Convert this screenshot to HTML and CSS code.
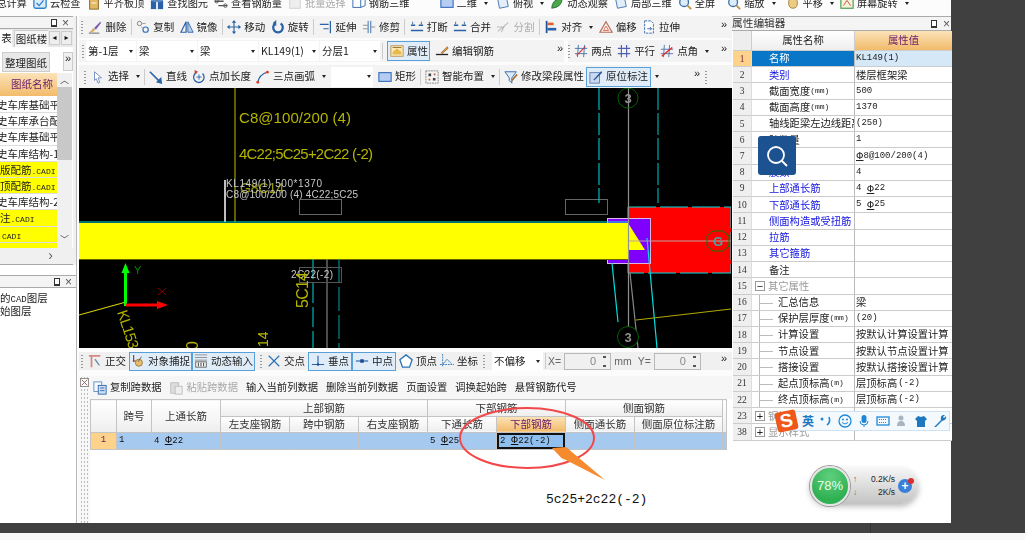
FILE: index.html
```html
<!DOCTYPE html>
<html lang="zh">
<head>
<meta charset="utf-8">
<title>属性编辑器</title>
<link rel="stylesheet" href="styles.css">
</head>
<body>
<svg class="defs" width="0" height="0">
  <symbol id="i-brush" viewBox="0 0 16 16"><path d="M1 14 Q4 13 6 9 L8 11 Q6 14 1 14Z" fill="#e0a040"/><path d="M7 9 L14 2 L15 3 L9 11Z" fill="#7a5ab0"/><path d="M1 15H13" stroke="#555"/></symbol>
  <symbol id="i-copy" viewBox="0 0 16 16"><circle cx="4" cy="4" r="2.5" fill="none" stroke="#777"/><circle cx="11" cy="11" r="3" fill="none" stroke="#3a76b8" stroke-width="1.4"/><path d="M7 4H11M6 8L9 10" stroke="#999"/></symbol>
  <symbol id="i-mirror" viewBox="0 0 16 16"><path d="M7 2V14H1Z" fill="none" stroke="#2a62a8" stroke-width="1.4"/><path d="M9 2V14H15Z" fill="#bcd2ea" stroke="#2a62a8"/></symbol>
  <symbol id="i-move" viewBox="0 0 16 16"><path d="M8 1V15M1 8H15" stroke="#2a62a8" stroke-width="1.3"/><path d="M8 0L10.500 3H5.500ZM8 16L5.500 13H10.500ZM0 8L3 5.500V10.500ZM16 8L13 10.500V5.500Z" fill="#2a62a8"/></symbol>
  <symbol id="i-rotate" viewBox="0 0 16 16"><path d="M11 4 A5.500 5.500 0 1 1 5 4" fill="none" stroke="#2a62a8" stroke-width="2.600"/><path d="M6 0V7L2 3.500Z" fill="#2a62a8"/></symbol>
  <symbol id="i-extend" viewBox="0 0 16 16"><path d="M13 1V15M1 5H11M5 10H11" stroke="#2a62a8" stroke-width="1.4"/></symbol>
  <symbol id="i-trim" viewBox="0 0 16 16"><path d="M7 1V15M10 1V15" stroke="#2a62a8"/><path d="M1 6H7M1 10H7M10 8H15" stroke="#888"/></symbol>
  <symbol id="i-break" viewBox="0 0 16 16"><path d="M1 6H6M10 6H15M1 12H15" stroke="#2a62a8" stroke-width="1.5"/><path d="M3 2V5M13 2V5" stroke="#2a62a8"/></symbol>
  <symbol id="i-split" viewBox="0 0 16 16"><path d="M2 13L14 3M1 8H9L6 14" stroke="#bbb" fill="none" stroke-width="1.3"/></symbol>
  <symbol id="i-align" viewBox="0 0 16 16"><path d="M3 1V15" stroke="#20509a" stroke-width="2"/><rect x="4" y="3" width="7" height="3" fill="#e06030"/><rect x="4" y="9" width="10" height="3" fill="#2a62a8"/></symbol>
  <symbol id="i-offset" viewBox="0 0 16 16"><path d="M8 2L15 14H1Z" fill="#fff0e8" stroke="#b07060" stroke-width="1.300"/><path d="M8 7L11 12H5Z" fill="none" stroke="#e06050"/></symbol>
  <symbol id="i-stretch" viewBox="0 0 16 16"><path d="M3 1H10L13 4V15H3Z" fill="#fff" stroke="#2a62a8" stroke-dasharray="3 1"/><path d="M6 10H11M9 8L11 10L9 12" stroke="#2a62a8" fill="none"/></symbol>
  <symbol id="i-prop" viewBox="0 0 16 16"><rect x="1" y="2" width="14" height="12" fill="#fbe9b8" stroke="#b89048"/><path d="M3 9L8 5L13 9V12H3Z" fill="#e8b84c"/><path d="M3 4H13" stroke="#8a6a30"/></symbol>
  <symbol id="i-edit" viewBox="0 0 16 16"><path d="M1 12H15" stroke="#222" stroke-width="1.500"/><path d="M7 10L14 3L15 5L8 11Z" fill="#d8a040" stroke="#804020" stroke-width=".6"/></symbol>
  <symbol id="i-two" viewBox="0 0 16 16"><path d="M5 1L4 15M12 1L11 15M1 5H15M1 11H15" stroke="#3a6ea8"/><path d="M3 13L13 3" stroke="#d83030" stroke-width="1.300"/></symbol>
  <symbol id="i-para" viewBox="0 0 16 16"><path d="M5 1V15M11 1V15M1 5H15M1 11H15" stroke="#5060b0" stroke-width="1.300"/></symbol>
  <symbol id="i-angle" viewBox="0 0 16 16"><path d="M5 1L4 15M11 1L10 15M1 6H15M1 11H15" stroke="#4a70b0"/><path d="M2 14L14 4" stroke="#e02828" stroke-width="1.500"/></symbol>
  <symbol id="i-select" viewBox="0 0 16 16"><path d="M4 2L12 9H8L10 14L8 15L6 10L4 12Z" fill="#fff" stroke="#6a86c0"/></symbol>
  <symbol id="i-line" viewBox="0 0 16 16"><path d="M1 2L12 13" stroke="#2a62a8" stroke-width="1.800"/><path d="M15 16L8 14L14 8Z" fill="#2a62a8"/></symbol>
  <symbol id="i-addlen" viewBox="0 0 16 16"><path d="M5 3A6 6 0 1 0 12 4" fill="none" stroke="#2a62a8" stroke-width="1.500"/><path d="M5 8H11M8 5V11" stroke="#2a62a8"/><path d="M3 0L7 2L3 5Z" fill="#d04030"/></symbol>
  <symbol id="i-arc" viewBox="0 0 16 16"><path d="M2 15Q3 5 14 2" fill="none" stroke="#2a62a8" stroke-width="1.300"/><circle cx="2" cy="14" r="1.600" fill="#e04020"/><circle cx="13" cy="2.500" r="1.600" fill="#e04020"/></symbol>
  <symbol id="i-rect" viewBox="0 0 16 16"><rect x="1" y="3" width="14" height="10" fill="#b5cdf0" stroke="#3a70c0" stroke-width="1.300"/></symbol>
  <symbol id="i-smart" viewBox="0 0 16 16"><rect x="1" y="1" width="14" height="14" fill="#f4f4f4" stroke="#777" stroke-dasharray="2 1"/><path d="M4 4h3v3h-3zM9 9h3v3h-3z" fill="#444"/><path d="M10 4h2v2h-2zM4 10h2v2h-2z" fill="#c06030"/></symbol>
  <symbol id="i-funnel" viewBox="0 0 16 16"><path d="M1 2H14L9 9V15L6 12V9Z" fill="#dbe9f8" stroke="#2a62a8"/><path d="M9 12L15 5" stroke="#a07030" stroke-width="1.800"/></symbol>
  <symbol id="i-mark" viewBox="0 0 16 16"><rect x="1" y="3" width="11" height="12" fill="#c9daf0" stroke="#5a7ab0"/><path d="M5 11L14 1L15 3L6 12Z" fill="#2a5a98"/></symbol>
  <symbol id="i-ortho" viewBox="0 0 16 16"><path d="M1 2H14M4 2V15" stroke="#d08a80" stroke-width="2"/><path d="M8 6L13 13" stroke="#6a8ab0" stroke-width="1.500"/></symbol>
  <symbol id="i-snap" viewBox="0 0 16 16"><path d="M3 1V9M2 8H8" stroke="#a04030" stroke-width="1.400"/><circle cx="9" cy="10" r="4" fill="#e8c070" stroke="#9a7030"/><path d="M12 3L8 9" stroke="#555"/></symbol>
  <symbol id="i-dyn" viewBox="0 0 16 16"><path d="M1 1H15M1 4H15M1 7H15" stroke="#888"/><rect x="2" y="9" width="12" height="6" fill="#fff" stroke="#555"/><path d="M5 10V14M8 10V14M11 10V14" stroke="#222"/></symbol>
  <symbol id="i-cross" viewBox="0 0 16 16"><path d="M2 2L14 14M14 2L2 14" stroke="#2a72b8" stroke-width="1.400"/></symbol>
  <symbol id="i-perp" viewBox="0 0 16 16"><path d="M1 12H15M8 2V12" stroke="#2a62a8" stroke-width="1.300"/><circle cx="8" cy="12" r="1.500" fill="#1a4a90"/></symbol>
  <symbol id="i-mid" viewBox="0 0 16 16"><path d="M1 8H15" stroke="#2a62a8" stroke-width="1.300"/><rect x="6" y="6" width="4" height="4" fill="#1a4a90"/></symbol>
  <symbol id="i-vertex" viewBox="0 0 16 16"><path d="M8 1L15 6.500L12 15H4L1 6.500Z" fill="#fff" stroke="#2a72b8" stroke-width="1.500"/></symbol>
  <symbol id="i-coord" viewBox="0 0 16 16"><path d="M3 0V15M0 12H16" stroke="#2a72b8" stroke-dasharray="2 1"/><path d="M3 12L8 6L13 11" stroke="#3a8ac8" fill="none"/></symbol>
  <symbol id="i-paste" viewBox="0 0 16 16"><rect x="2" y="2" width="9" height="12" fill="#ddd" stroke="#bbb"/><rect x="7" y="6" width="8" height="9" fill="#eee" stroke="#bbb"/></symbol>
  <symbol id="i-copy2" viewBox="0 0 16 16"><rect x="1" y="1" width="9" height="11" fill="#f4f8fc" stroke="#5a8ac0"/><rect x="6" y="5" width="9" height="10" fill="#cfe0f4" stroke="#2a62a8"/><path d="M8 8H13M8 11H13" stroke="#2a62a8"/></symbol>
  <symbol id="i-cloud" viewBox="0 0 16 16"><rect x="1" y="3" width="14" height="11" rx="2" fill="#dcecfa" stroke="#2a82d0" stroke-width="1.500"/><path d="M4 8L7 11L12 5" stroke="#2a82d0" fill="none" stroke-width="1.500"/></symbol>
  <symbol id="i-view" viewBox="0 0 16 16"><path d="M2 4L12 2L14 12L4 14Z" fill="#e4eefa" stroke="#3a6ea8"/></symbol>
  <symbol id="i-leaf" viewBox="0 0 16 16"><path d="M2 14Q2 4 14 2Q14 13 2 14Z" fill="#4aa84a" stroke="#2a6a3a"/></symbol>
  <symbol id="i-zoom" viewBox="0 0 16 16"><circle cx="7" cy="7" r="5" fill="#dcecfa" stroke="#3a6ea8" stroke-width="1.500"/><path d="M11 11L15 15" stroke="#c09040" stroke-width="2"/></symbol>
  <symbol id="i-hand" viewBox="0 0 16 16"><path d="M3 8Q3 3 6 3Q8 1 10 3Q13 3 13 8Q13 14 8 14Q3 14 3 8Z" fill="#eccb82" stroke="#a08040"/></symbol>
  <symbol id="i-screen" viewBox="0 0 16 16"><rect x="1" y="2" width="14" height="12" fill="#f4f4d8" stroke="#4a9a4a" stroke-width="1.300"/><path d="M4 11L8 5L12 11" stroke="#d04040" fill="none"/></symbol>
  <symbol id="i-calc" viewBox="0 0 16 16"><rect x="3" y="1" width="10" height="14" fill="#e4b860" stroke="#806020"/><path d="M5 4H11M5 8H11" stroke="#fff"/></symbol>
  <symbol id="i-find" viewBox="0 0 16 16"><rect x="1" y="5" width="6" height="10" fill="#2a62a8"/><rect x="9" y="5" width="6" height="10" fill="#2a62a8"/><rect x="3" y="2" width="10" height="5" fill="#5a8ac0"/></symbol>
  <symbol id="i-view2" viewBox="0 0 16 16"><path d="M1 6H11M5 11H15" stroke="#555" stroke-width="1.500"/><circle cx="3" cy="6" r="2" fill="none" stroke="#555"/><circle cx="13" cy="11" r="2" fill="none" stroke="#555"/></symbol>
  <symbol id="i-batch" viewBox="0 0 16 16"><rect x="2" y="3" width="12" height="11" fill="#eee" stroke="#ccc"/></symbol>
  <symbol id="i-steel" viewBox="0 0 16 16"><rect x="1" y="3" width="9" height="10" fill="none" stroke="#2a62a8"/><path d="M10 4L15 2V11L10 13" fill="none" stroke="#2a62a8"/></symbol>
</svg>

<div class="screen">
  <div class="desk">
    <div class="app">
      <div class="topbar">
        <span class="ti t-clip">总计算</span>
        <span class="ti"><svg class="ic"><use href="#i-cloud"/></svg>云检查</span>
        <span class="ti"><svg class="ic"><use href="#i-calc"/></svg>平齐板顶</span>
        <span class="ti"><svg class="ic"><use href="#i-find"/></svg>查找图元</span>
        <span class="ti"><svg class="ic"><use href="#i-view2"/></svg>查看钢筋量</span>
        <span class="ti off"><svg class="ic"><use href="#i-batch"/></svg>批量选择</span>
        <span class="ti"><svg class="ic"><use href="#i-steel"/></svg>钢筋三维</span>
        <span class="ti gap-2d"><svg class="ic"><use href="#i-rect"/></svg>二维<i class="caret"></i></span>
        <span class="ti gap-a"><svg class="ic"><use href="#i-view"/></svg>俯视<i class="caret"></i></span>
        <span class="ti"><svg class="ic"><use href="#i-leaf"/></svg>动态观察</span>
        <span class="ti"><svg class="ic"><use href="#i-view"/></svg>局部三维</span>
        <span class="ti"><svg class="ic"><use href="#i-zoom"/></svg>全屏</span>
        <span class="ti gap-b"><svg class="ic"><use href="#i-zoom"/></svg>缩放<i class="caret"></i></span>
        <span class="ti gap-c"><svg class="ic"><use href="#i-hand"/></svg>平移<i class="caret"></i></span>
        <span class="ti"><svg class="ic"><use href="#i-screen"/></svg>屏幕旋转<i class="caret"></i></span>
      </div>

      <div class="work">
        <aside class="lside">
          <section class="lpanel upper">
            <header class="ptitle"><b class="pin"></b><b class="close">×</b></header>
            <div class="tabs">
              <span class="tab on">表</span>
              <span class="tab cut">图纸楼</span>
              <span class="tabarrow">◂</span>
              <span class="tabarrow">▸</span>
            </div>
            <div class="ltools"><span class="lbtn">整理图纸</span><span class="more box">»</span></div>
            <div class="dwg">
              <div class="dwg-table">
                <div class="dwg-h">图纸名称</div>
                <div class="dwg-r cutleft">史车库基础平面</div>
                <div class="dwg-r cutleft">史车库承台配筋</div>
                <div class="dwg-r cutleft">史车库基础平面</div>
                <div class="dwg-r cutleft">史车库结构-1</div>
                <div class="dwg-r y">版配筋<em>.CADI</em></div>
                <div class="dwg-r y">顶配筋<em>.CADI</em></div>
                <div class="dwg-r cutleft">史车库结构-2</div>
                <div class="dwg-r y">注<em>.CADI</em></div>
                <div class="dwg-r y pad2"><em>CADI</em></div>
                <div class="dwg-r y tail pad2"><em>CADI</em></div>
              </div>
              <div class="vscroll">
                <span class="sb-arrow">︿</span>
                <span class="sb-thumb"></span>
                <span class="sb-arrow end">﹀</span>
              </div>
            </div>
            <div class="hscroll">›</div>
          </section>
          <section class="lpanel lower">
            <header class="ptitle"><b class="pin"></b><b class="close">×</b></header>
            <div class="layers">
              <div class="layer">的<em>CAD</em>图层</div>
              <div class="layer">始图层</div>
            </div>
          </section>
        </aside>

        <main class="center">
          <div class="tb r1">
            <i class="grip"></i>
            <span class="ti"><svg class="ic"><use href="#i-brush"/></svg>删除</span>
            <i class="sep"></i>
            <span class="ti"><svg class="ic"><use href="#i-copy"/></svg>复制</span>
            <span class="ti"><svg class="ic"><use href="#i-mirror"/></svg>镜像</span>
            <i class="sep"></i>
            <span class="ti"><svg class="ic"><use href="#i-move"/></svg>移动</span>
            <span class="ti"><svg class="ic"><use href="#i-rotate"/></svg>旋转</span>
            <i class="sep"></i>
            <span class="ti"><svg class="ic"><use href="#i-extend"/></svg>延伸</span>
            <span class="ti"><svg class="ic"><use href="#i-trim"/></svg>修剪</span>
            <i class="sep"></i>
            <span class="ti"><svg class="ic"><use href="#i-break"/></svg>打断</span>
            <span class="ti"><svg class="ic"><use href="#i-break"/></svg>合并</span>
            <span class="ti off"><svg class="ic"><use href="#i-split"/></svg>分割</span>
            <i class="sep"></i>
            <span class="ti"><svg class="ic"><use href="#i-align"/></svg>对齐<i class="caret"></i></span>
            <span class="ti"><svg class="ic"><use href="#i-offset"/></svg>偏移</span>
            <span class="ti"><svg class="ic"><use href="#i-stretch"/></svg>拉伸</span>
            <span class="more end">»</span>
          </div>

          <div class="tb r2">
            <i class="grip"></i>
            <span class="combo w50">第-1层<i class="caret"></i></span>
            <span class="combo w60">梁<i class="caret"></i></span>
            <span class="combo w60">梁<i class="caret"></i></span>
            <span class="combo w60">KL149(1)<i class="caret"></i></span>
            <span class="combo w60">分层1<i class="caret"></i></span>
            <i class="sep"></i>
            <span class="ti sel w43"><svg class="ic"><use href="#i-prop"/></svg>属性</span>
            <span class="ti"><svg class="ic"><use href="#i-edit"/></svg>编辑钢筋</span>
            <span class="more m-mid">»</span>
            <i class="split"></i>
            <i class="grip"></i>
            <span class="ti"><svg class="ic"><use href="#i-two"/></svg>两点</span>
            <span class="ti"><svg class="ic"><use href="#i-para"/></svg>平行</span>
            <span class="ti"><svg class="ic"><use href="#i-angle"/></svg>点角<i class="caret"></i></span>
            <span class="more end">»</span>
          </div>

          <div class="tb r3">
            <i class="grip"></i>
            <span class="ti"><svg class="ic"><use href="#i-select"/></svg>选择<i class="caret"></i></span>
            <i class="sep"></i>
            <span class="ti"><svg class="ic"><use href="#i-line"/></svg>直线</span>
            <span class="ti"><svg class="ic"><use href="#i-addlen"/></svg>点加长度</span>
            <span class="ti"><svg class="ic"><use href="#i-arc"/></svg>三点画弧<i class="caret"></i></span>
            <span class="combo w38"><i class="caret"></i></span>
            <span class="ti"><svg class="ic"><use href="#i-rect"/></svg>矩形</span>
            <i class="sep"></i>
            <span class="ti"><svg class="ic"><use href="#i-smart"/></svg>智能布置<i class="caret"></i></span>
            <i class="sep"></i>
            <span class="ti"><svg class="ic"><use href="#i-funnel"/></svg>修改梁段属性</span>
            <span class="ti sel mark-btn"><svg class="ic"><use href="#i-mark"/></svg>原位标注</span>
            <i class="caret tight"></i>
            <span class="more m-r3">»</span>
            <i class="grip"></i>
          </div>

          <div class="canvas">
            <svg class="cad" viewBox="0 0 652 260" width="652" height="260">
              <rect width="652" height="260" fill="#000"/>
              <line x1="156" y1="0" x2="156" y2="134" stroke="#808000" stroke-width="1.500"/>
              <text x="160" y="35" class="cad-y" textLength="112" font-size="15">C8@100/200 (4)</text>
              <text x="160" y="71" class="cad-y" textLength="134" font-size="15">4C22;5C25+2C22 (-2)</text>
              <line x1="146" y1="92" x2="146" y2="134" stroke="#fff" stroke-width="1.500"/>
              <text x="161" y="105" class="cad-y dim" textLength="44" font-size="14">G8C14</text>
              <text x="147" y="99" class="cad-w" textLength="96" font-size="10">KL149(1) 500*1370</text>
              <text x="147" y="110" class="cad-w" textLength="132" font-size="10">C8@100/200 (4)  4C22;5C25</text>
              <rect x="220.500" y="111.500" width="42" height="15" fill="none" stroke="#666"/>
              <rect x="486.500" y="111.500" width="42" height="15" fill="none" stroke="#666"/>

              <line x1="520" y1="0" x2="520" y2="115" stroke="#00b8b8" stroke-dasharray="22 3" stroke-width="1.200"/>
              <line x1="579" y1="0" x2="579" y2="115" stroke="#00a8a8" stroke-dasharray="22 3" stroke-width="1.200"/>

              <rect x="549" y="119" width="103" height="66" fill="#f00"/>
              <rect x="549" y="119" width="103" height="66" fill="none" stroke="#00d8d8" stroke-dasharray="28 4"/>
              <rect x="528.500" y="130.500" width="43" height="45" fill="#8000ff" stroke="#d8b8e0"/>
              <polygon points="0,135 549,135 566,162 549,162 549,171 0,171" fill="#ff0"/>
              <line x1="0" y1="134" x2="549" y2="134" stroke="#00e8d8"/>
              <line x1="0" y1="171.500" x2="549" y2="171.500" stroke="#666600"/>
              <path d="M549 153H652" stroke="#c0a0a0" stroke-width="1.200"/>
              <line x1="549.500" y1="0" x2="549.500" y2="260" stroke="#909090" stroke-width="1.200"/>

              <circle cx="549" cy="10" r="10" fill="none" stroke="#006000"/>
              <text x="549" y="15" class="cad-n">3</text>
              <polygon points="634,143 644,143 650,148 650,158 644,163 634,163 628,158 628,148" fill="none" stroke="#008000"/>
              <text x="639" y="158" class="cad-n teal">G</text>

              <line x1="533" y1="175" x2="539" y2="234" stroke="#00e0e0" stroke-width="1.200"/>
              <line x1="568" y1="150" x2="578" y2="260" stroke="#00e0e0" stroke-width="1.200"/>
              <line x1="551" y1="185" x2="559" y2="260" stroke="#888" stroke-width="1.200"/>
              <line x1="557" y1="232" x2="652" y2="221" stroke="#b0a800" stroke-width="1.200"/>
              <circle cx="549" cy="249" r="10.500" fill="#000" stroke="#006000"/>
              <text x="549" y="254" class="cad-n">3</text>

              <line x1="234" y1="171" x2="234" y2="260" stroke="#00d8d8" stroke-dasharray="20 4"/>
              <line x1="248" y1="171" x2="248" y2="260" stroke="#808080" stroke-width="1.200"/>
              <line x1="260" y1="171" x2="260" y2="260" stroke="#008888" stroke-width="1.200" stroke-dasharray="24 4"/>
              <rect x="220.500" y="179.500" width="42" height="15" fill="none" stroke="#555"/>
              <text x="212" y="190" class="cad-w" textLength="42" font-size="10">2C22(-2)</text>
              <text class="cad-y" font-size="16" textLength="36" transform="translate(229 220) rotate(-90)">5C14</text>
              <text class="cad-y" font-size="14" transform="translate(189 259) rotate(-90)">14</text>
              <text class="cad-y" font-size="16" transform="translate(119 262) rotate(-90)">0</text>
              <text class="cad-y" font-size="15" textLength="40" transform="translate(38 224) rotate(72)">KL153</text>
              <line x1="0" y1="227" x2="47" y2="214" stroke="#d8d000" stroke-width="1.200"/>
              <rect x="45" y="185" width="3" height="33" fill="#00ff00"/>
              <polygon points="46.500,175 50.500,185 42.500,185" fill="#00ff00"/>
              <rect x="47" y="215.500" width="33" height="3" fill="#ff0000"/>
              <polygon points="89,217 78,213 78,221" fill="#ff0000"/>
              <text x="55" y="186" class="cad-ax">Y</text>
              <path d="M79 200L87 207M87 200L79 207" stroke="#900000" fill="none"/>
            </svg>
          </div>

          <div class="tb snapbar">
            <i class="grip"></i>
            <span class="ti"><svg class="ic"><use href="#i-ortho"/></svg>正交</span>
            <span class="tog-group">
              <span class="ti sel"><svg class="ic"><use href="#i-snap"/></svg>对象捕捉</span>
              <span class="ti sel"><svg class="ic"><use href="#i-dyn"/></svg>动态输入</span>
            </span>
            <i class="grip"></i>
            <span class="ti"><svg class="ic"><use href="#i-cross"/></svg>交点</span>
            <span class="tog-group pts">
              <span class="ti sel"><svg class="ic"><use href="#i-perp"/></svg>垂点</span>
              <span class="ti sel"><svg class="ic"><use href="#i-mid"/></svg>中点</span>
            </span>
            <span class="ti"><svg class="ic"><use href="#i-vertex"/></svg>顶点</span>
            <span class="ti"><svg class="ic"><use href="#i-coord"/></svg>坐标</span>
            <i class="grip"></i>
            <span class="combo plain">不偏移<i class="caret"></i></span>
            <i class="sep"></i>
            <span class="lbl">X=</span>
            <span class="spin">0<i class="updown"></i></span>
            <span class="lbl">mm</span>
            <span class="lbl ylbl">Y=</span>
            <span class="spin">0<i class="updown"></i></span>
            <span class="more end">»</span>
          </div>

          <div class="gridpanel">
            <div class="handle"><svg class="hicon" viewBox="0 0 10 10"><rect x=".5" y=".5" width="9" height="9" fill="#fff" stroke="#888"/><path d="M2 2L8 8M8 2L2 8" stroke="#a05050"/></svg></div>
            <div class="gridbody">
              <div class="gridtools">
                <span class="ti"><svg class="ic"><use href="#i-copy2"/></svg>复制跨数据</span>
                <span class="ti off"><svg class="ic"><use href="#i-paste"/></svg>粘贴跨数据</span>
                <span class="ti">输入当前列数据</span>
                <span class="ti">删除当前列数据</span>
                <span class="ti">页面设置</span>
                <span class="ti">调换起始跨</span>
                <span class="ti">悬臂钢筋代号</span>
              </div>
              <table class="span-table">
                <colgroup>
                  <col class="c-num"><col class="c-span"><col class="c-std"><col class="c-std"><col class="c-std"><col class="c-std"><col class="c-std"><col class="c-std"><col class="c-std"><col class="c-wide"><col>
                </colgroup>
                <thead>
                  <tr>
                    <th rowspan="2"></th><th rowspan="2">跨号</th><th rowspan="2">上通长筋</th>
                    <th colspan="3">上部钢筋</th><th colspan="2">下部钢筋</th><th colspan="2">侧面钢筋</th><th rowspan="2"></th>
                  </tr>
                  <tr>
                    <th>左支座钢筋</th><th>跨中钢筋</th><th>右支座钢筋</th><th>下通长筋</th><th class="active">下部钢筋</th><th>侧面通长筋</th><th>侧面原位标注筋</th>
                  </tr>
                </thead>
                <tbody>
                  <tr>
                    <td class="rn">1</td><td>1</td><td class="cur">4 <span class="bar">Φ</span>22</td><td></td><td></td><td></td><td>5 <span class="bar">Φ</span>25</td><td class="focus">2 <span class="bar">Φ</span>22(-2)</td><td></td><td></td><td></td>
                  </tr>
                </tbody>
              </table>
            </div>
          </div>
        </main>

        <aside class="rside">
          <header class="rtitle"><span>属性编辑器</span><b class="pin"></b><b class="close">×</b></header>
          <div class="pg">
            <div class="ph corner"></div><div class="ph">属性名称</div><div class="ph act">属性值</div>
            <div class="pn act">1</div><div class="pk hl">名称</div><div class="pv hl2">KL149(1)</div>
            <div class="pn">2</div><div class="pk link">类别</div><div class="pv cn">楼层框架梁</div>
            <div class="pn">3</div><div class="pk">截面宽度<em>(mm)</em></div><div class="pv">500</div>
            <div class="pn">4</div><div class="pk">截面高度<em>(mm)</em></div><div class="pv">1370</div>
            <div class="pn">5</div><div class="pk">轴线距梁左边线距离</div><div class="pv">(250)</div>
            <div class="pn">6</div><div class="pk">跨数量</div><div class="pv">1</div>
            <div class="pn">7</div><div class="pk link">箍筋</div><div class="pv"><span class="bar">Φ</span>8@100/200(4)</div>
            <div class="pn">8</div><div class="pk link">肢数</div><div class="pv">4</div>
            <div class="pn">9</div><div class="pk link">上部通长筋</div><div class="pv">4 <span class="bar">Φ</span>22</div>
            <div class="pn">10</div><div class="pk link">下部通长筋</div><div class="pv">5 <span class="bar">Φ</span>25</div>
            <div class="pn">11</div><div class="pk link">侧面构造或受扭筋</div><div class="pv"></div>
            <div class="pn">12</div><div class="pk link">拉筋</div><div class="pv"></div>
            <div class="pn">13</div><div class="pk link">其它箍筋</div><div class="pv"></div>
            <div class="pn">14</div><div class="pk">备注</div><div class="pv"></div>
            <div class="pn">15</div><div class="pk group"><i class="exp">−</i>其它属性</div><div class="pv"></div>
            <div class="pn">16</div><div class="pk tree">汇总信息</div><div class="pv cn">梁</div>
            <div class="pn">17</div><div class="pk tree">保护层厚度<em>(mm)</em></div><div class="pv">(20)</div>
            <div class="pn">18</div><div class="pk tree">计算设置</div><div class="pv cn">按默认计算设置计算</div>
            <div class="pn">19</div><div class="pk tree">节点设置</div><div class="pv cn">按默认节点设置计算</div>
            <div class="pn">20</div><div class="pk tree">搭接设置</div><div class="pv cn">按默认搭接设置计算</div>
            <div class="pn">21</div><div class="pk tree">起点顶标高<em>(m)</em></div><div class="pv cn">层顶标高<em>(-2)</em></div>
            <div class="pn">22</div><div class="pk tree">终点顶标高<em>(m)</em></div><div class="pv cn">层顶标高<em>(-2)</em></div>
            <div class="pn">23</div><div class="pk group"><i class="exp">+</i>钢筋业务属性</div><div class="pv"></div>
            <div class="pn">38</div><div class="pk group"><i class="exp">+</i>显示样式</div><div class="pv"></div>
          </div>
        </aside>
      </div>
    </div>
  </div>
  <div class="footer"></div>

  <!-- overlays -->
  <div class="searchbtn"><svg viewBox="0 0 24 24" width="24" height="24"><circle cx="11" cy="11" r="8" fill="none" stroke="#fff" stroke-width="1.800"/><path d="M17 17L22 22" stroke="#fff" stroke-width="2"/></svg></div>

  <svg class="mark" viewBox="0 0 1025 540" width="1025" height="540">
    <ellipse cx="527" cy="438" rx="67" ry="30" fill="none" stroke="#f2484a" stroke-width="2"/>
    <polygon points="552,448 566,447 605,480 562,458 571,468" fill="#f58a2e"/>
  </svg>
  <div class="note">5c25+2c22(-2)</div>

  <div class="sogou">
    <span class="slogo">S</span>
    <span class="sg-en">英</span>
    <svg class="sg" viewBox="0 0 14 14"><circle cx="3" cy="5" r="1.500" fill="#1e88d8"/><path d="M10 3Q12 8 8 11" fill="none" stroke="#1e88d8" stroke-width="1.600"/></svg>
    <svg class="sg" viewBox="0 0 14 14"><circle cx="7" cy="7" r="6" fill="none" stroke="#1e88d8" stroke-width="1.300"/><circle cx="5" cy="5.500" r="1" fill="#1e88d8"/><circle cx="9" cy="5.500" r="1" fill="#1e88d8"/><path d="M4 8.500Q7 11.500 10 8.500" fill="none" stroke="#1e88d8"/></svg>
    <svg class="sg" viewBox="0 0 14 14"><rect x="4.500" y="1" width="5" height="8" rx="2.500" fill="#1e88d8"/><path d="M3 7Q3 11 7 11Q11 11 11 7M7 11V13" fill="none" stroke="#1e88d8"/></svg>
    <svg class="sg" viewBox="0 0 14 14"><rect x="1" y="3" width="12" height="8" fill="none" stroke="#1e88d8" stroke-width="1.300"/><path d="M3 5.500H11M3 8.500H11" stroke="#1e88d8" stroke-dasharray="1 1"/></svg>
    <svg class="sg" viewBox="0 0 14 14"><circle cx="6" cy="4" r="2.500" fill="#a8b4c0"/><path d="M2 12Q2 7 6 7Q10 7 10 12Z" fill="#a8b4c0"/></svg>
    <svg class="sg" viewBox="0 0 14 14"><path d="M4 2L7 3L10 2L13 5L11 7V13H3V7L1 5Z" fill="#1e78c0"/></svg>
    <svg class="sg" viewBox="0 0 14 14"><path d="M1 13L8 6Q7 2 10 1L12 1L10 3L11 4L13 2Q14 6 9 7L3 13Z" fill="#1e78c0"/></svg>
  </div>

  <div class="netwidget">
    <div class="gauge">78%</div>
    <div class="speeds">
      <div class="sp"><i class="up">↑</i><span>0.2K/s</span></div>
      <div class="sp"><i class="down">↓</i><span>2K/s</span></div>
    </div>
    <div class="plus">+<i class="dot"></i></div>
  </div>
</div>
</body>
</html>
```
FILE: styles.css
```css
* { box-sizing: border-box; }
html, body { margin: 0; padding: 0; }
body { width: 1025px; height: 540px; overflow: hidden; font: 10.5px/1 "Noto Sans CJK SC", "Liberation Sans", sans-serif; color: #222; }
i { font-style: normal; }
em { font: 8px/1 "Liberation Mono", monospace; }
b { font-weight: normal; }
.defs { position: absolute; }

.screen { position: relative; width: 1025px; height: 540px; display: flex; flex-direction: column; background: #f8f8f8; }
.desk { height: 533px; flex: none; background: linear-gradient(#333, #333) 870px 523px / 1px 10px no-repeat, #404040; }
.footer { flex: 1; }
.app { width: 951px; height: 523px; display: flex; flex-direction: column; background: #fcfcfc; filter: blur(.4px); }

.topbar { height: 16px; flex: none; display: flex; align-items: flex-start; gap: 6px; overflow: hidden; font-size: 10.2px; }
.topbar .ti { margin-top: -4px; height: 14px; }
.topbar .t-clip { width: 27px; justify-content: flex-end; overflow: hidden; white-space: nowrap; }
.topbar .gap-2d { margin-left: 24px; }
.topbar .gap-a { margin-left: 2px; }
.topbar .gap-b { margin-left: 6px; }
.topbar .gap-c { margin-left: 4px; }

.ti { display: inline-flex; align-items: center; gap: 3px; white-space: nowrap; flex: none; }
.ti.off { color: #aaa; }
.ic { width: 14px; height: 14px; flex: none; }
.caret { display: inline-block; width: 0; height: 0; border: 2.5px solid transparent; border-top: 3px solid #222; border-bottom: 0; margin-left: 4px; flex: none; }
.caret.tight { margin-left: -1px; }
.sep { width: 1px; height: 16px; background: #ccc; margin: 0 -1px; flex: none; }
.grip { width: 2px; height: 14px; flex: none; background: radial-gradient(circle, #999 0.7px, transparent 1px) 0 0 / 2px 3px; }
.more { font: 11px/1 "Liberation Sans", sans-serif; color: #222; flex: none; }
.more.end { margin-left: auto; margin-right: 5px; margin-top: -6px; }
.more.m-mid { margin-left: 60px; margin-top: -6px; }
.more.m-r3 { margin-left: 30px; margin-top: -6px; }
.split { width: 4px; height: 24px; background: #fcfcfc; flex: none; margin: 0 -2px 0 0; }

.work { flex: 1; display: flex; min-height: 0; }

.lside { width: 77px; flex: none; display: flex; flex-direction: column; background: #fff; border-right: 1px solid #b8b8b8; }
.lpanel.upper { height: 249px; flex: none; background: #f0f0f0; border-bottom: 1px solid #aaa; width: 73px; box-shadow: 3px 0 0 #f0f0f0; }
.lpanel.lower { margin-top: 10px; flex: 1; background: #fff; }
.ptitle { height: 13px; display: flex; justify-content: flex-end; align-items: center; gap: 5px; padding-right: 3px; background: #f4f4f4; border-top: 1px solid #aaa; border-bottom: 1px solid #aaa; }
.pin { width: 6px; height: 8px; border: 1px solid #333; border-bottom-width: 2px; background: #fff; flex: none; }
.close { font: 12px/1 "Liberation Sans", sans-serif; color: #555; width: 8px; flex: none; }
.tabs { height: 18px; display: flex; align-items: flex-end; background: #e8e8e8; padding-right: 1px; }
.tab { height: 17px; line-height: 16px; white-space: nowrap; overflow: hidden; }
.tab.on { width: 12px; background: #fff; text-align: right; }
.tab.cut { width: 35px; margin-left: 2px; background: #f6f6f6; padding-left: 1px; border-left: 1px solid #ccc; border-top: 1px solid #ccc; }
.tabarrow { width: 11px; height: 14px; margin: 0 0 2px 1px; background: #eee; border: 1px solid #ccc; font: 8px/12px "DejaVu Sans", sans-serif; text-align: center; color: #111; flex: none; }
.ltools { height: 26px; display: flex; align-items: center; background: #fff; padding-top: 3px; }
.lbtn { height: 20px; margin-left: 2px; width: 48px; line-height: 19px; text-align: center; background: #e8e8e8; border: 1px solid #ccc; flex: none; }
.more.box { width: 10px; height: 19px; margin-left: 13px; text-align: center; background: #f0f0f0; border: 1px solid #ccc; line-height: 10px; }
.dwg { display: flex; height: 175px; background: #fff; overflow: hidden; }
.dwg-table { width: 57px; flex: none; }
.dwg-h { height: 23px; line-height: 22px; text-align: center; background: linear-gradient(#fbe3b8, #f2bb6b); color: #6a1a6a; margin-bottom: 1px; padding-left: 7px; }
.dwg-r { height: 16.200px; line-height: 15px; white-space: nowrap; overflow: hidden; background: #fff; color: #222; border-bottom: 1px solid #ddd; }
.dwg-r.y { background: #ff0; }
.dwg-r.cutleft { text-indent: -3px; }
.dwg-r.pad2 { padding-left: 2px; }
.vscroll { width: 15px; flex: none; display: flex; flex-direction: column; background: #f0f0f0; }
.sb-arrow { height: 14px; text-align: center; font: 9px/14px "Noto Sans CJK SC", sans-serif; color: #444; flex: none; }
.sb-arrow.end { margin-top: auto; margin-bottom: 3px; height: 12px; }
.sb-thumb { height: 73px; background: #c8c8c8; flex: none; }
.hscroll { height: 16px; text-align: right; padding-right: 20px; font: 14px/15px "Liberation Sans", sans-serif; color: #666; }
.layers { padding-top: 3px; }
.layer { height: 13px; line-height: 13px; color: #222; white-space: nowrap; overflow: hidden; }
.layer em { font-size: 9px; }

.center { width: 655px; flex: none; display: flex; flex-direction: column; background: #fcfcfc; padding-left: 2px; }
.tb { display: flex; align-items: center; gap: 6px; flex: none; background: #f3f3f3; }
.tb.r1 { height: 22px; padding-left: 2px; gap: 5.4px; }
.tb.r2 { height: 22px; margin-top: 2px; padding-left: 2px; gap: 1px; }
.tb.r3 { height: 23px; margin-top: 3px; padding-left: 5px; gap: 5px; }
.combo { height: 20px; background: #fff; display: inline-flex; align-items: center; justify-content: space-between; padding: 0 3px 0 2px; flex: none; white-space: nowrap; color: #222; }
.combo.w50 { width: 50px; }
.combo.w60 { width: 60px; }
.combo.w38 { width: 42px; justify-content: flex-end; padding-right: 2px; }
.combo.plain { width: 51px; margin-left: 2px; }
.r2 .sep { margin: 0 1px; }
.r2 .ti { margin: 0 2px; }
.r2 .grip { margin: 0 1px; }
.sel { padding: 0 2px; height: 20px; background: #e0edf9; border: 1px solid #5aa0d8; }
.mark-btn { margin-left: -3px; }
.w43 { width: 43px; }

.canvas { height: 260px; flex: none; background: #000; }
.cad { display: block; }
.cad-y { fill: #b4b400; font-family: "Liberation Sans", sans-serif; }
.cad-y.dim { fill: #9a9a00; }
.cad-w { fill: #c8c8c8; font-family: "Liberation Sans", sans-serif; }
.cad-n { fill: #909090; font: bold 13px "Liberation Sans", sans-serif; text-anchor: middle; }
.cad-n.teal { fill: #50a0a0; }
.cad-ax { fill: #008800; font: 11px "Liberation Sans", sans-serif; }

.snapbar { height: 18px; margin-top: 4px; padding-left: 0; gap: 3px; background: #f0f0f0; }
.snapbar .grip { margin: 0 2px; }
.snapbar .sel { height: 19px; padding: 0 1px; }
.tog-group { display: flex; flex: none; }
.snapbar .pts .sel { width: 44px; padding: 0 2px; }
.lbl { color: #666; flex: none; font-family: "Liberation Sans", sans-serif; }
.ylbl { margin-left: 3px; }
.spin { width: 47px; height: 17px; border: 1px solid #b8b8b8; background: #f0f0f0; display: flex; align-items: center; justify-content: flex-end; gap: 6px; padding-right: 3px; color: #888; flex: none; font-family: "Liberation Sans", sans-serif; font-size: 11px; }
.updown { width: 5px; height: 11px; background: linear-gradient(#555, #555) 50% 0 / 3px 2px no-repeat, linear-gradient(#555, #555) 50% 100% / 3px 2px no-repeat; }

.gridpanel { flex: 1; margin-top: 6px; display: flex; background: #f8f8f8; min-height: 0; }
.handle { width: 11px; flex: none; padding-left: 1px; background: radial-gradient(circle, #bbb .8px, transparent 1px) 50% 0 / 3px 4px; }
.hicon { width: 9px; height: 9px; display: block; margin-top: 2px; }
.gridbody { flex: 1; background: #fff; min-width: 0; }
.gridtools { height: 23px; display: flex; align-items: center; gap: 8px; padding-left: 3px; background: #f6f6f6; font-size: 10.3px; }
.span-table { width: 637px; border-collapse: collapse; table-layout: fixed; border-top: 1px solid #ccc; }
.span-table th, .span-table td { padding: 0; height: 16.500px; border: 1px solid #c4c4c4; font-weight: normal; color: #333; white-space: nowrap; overflow: hidden; }
.span-table th { text-align: center; background: linear-gradient(#fff, #eee); }
.c-num { width: 26px; } .c-span { width: 35px; } .c-std { width: 69px; } .c-wide { width: 88px; }
.span-table th.active { background: linear-gradient(#fbe3b8, #f2bb6b); color: #6a1a6a; }
.span-table td { background: #a5c9ef; padding-left: 2px; font-family: "Liberation Mono", "Noto Sans CJK SC", monospace; font-size: 9px; color: #111; }
.span-table td.rn { background: #fdd28a; text-align: center; color: #6a1a6a; padding: 0; }
.span-table td.cur { border-left: 1px solid #222; }
.span-table td.focus { background: #8fbfee; box-shadow: inset 0 0 0 2px #111; padding-left: 3px; }
.bar { font-family: "DejaVu Sans", sans-serif; font-size: 9.5px; text-decoration: underline; }

.rside { width: 219px; flex: none; background: #fff; }
.rtitle { height: 15px; display: flex; align-items: center; gap: 6px; background: #f4f4f4; border-top: 1px solid #aaa; border-bottom: 1px solid #aaa; font-size: 10.700px; color: #333; }
.rtitle span { margin-right: auto; }
.pg { display: grid; grid-template-columns: 19px 103px 97px; grid-template-rows: 20px; grid-auto-rows: 16.240px; margin-left: 1px; }
.pg > div { display: flex; align-items: center; white-space: nowrap; overflow: hidden; border-bottom: 1px solid #ccc; color: #222; background: #fff; }
.pg .ph { height: 20px; justify-content: center; background: linear-gradient(#fff, #eee); border-right: 1px solid #ccc; font-size: 10.400px; }
.pg .corner { background: #eee; }
.pg .ph.act { background: linear-gradient(#fbe3b8, #f2bb6b); color: #6a1a6a; border-right: 0; }
.pg .pn { justify-content: center; background: #efefef; font: 9.500px "Liberation Serif", serif; color: #333; border-right: 1px solid #ddd; }
.pg .pn.act { background: #fdd28a; color: #7a1a3a; }
.pg .pk { padding-left: 17px; font-size: 10.300px; border-right: 1px solid #bbb; }
.pg .pv { padding-left: 1px; font-size: 9px; font-family: "Liberation Mono", "Noto Sans CJK SC", monospace; white-space: pre; }
.pg .pv.cn { font-family: "Noto Sans CJK SC", sans-serif; font-size: 10.300px; }
.pg .pv em { font-size: 9px; margin-left: 1px; }
.pg .pk.hl { background: #0a76c8; color: #fff; }
.pg .pv.hl2 { background: #d5e8f8; }
.pg .pk.link { color: #1414e0; }
.pg .pk.group { color: #999; padding-left: 3px; gap: 3px; }
.exp { width: 10px; height: 10px; border: 1px solid #999; background: #fff; color: #222; font: 11px/8px "Liberation Sans", sans-serif; text-align: center; flex: none; }
.pg .pk.tree { padding-left: 26px; position: relative; }
.pg .pk.tree::before { content: ""; position: absolute; left: 7px; top: 0; height: 100%; border-left: 1px solid #bbb; }
.pg .pk.tree::after { content: ""; position: absolute; left: 7px; top: 8px; width: 14px; border-top: 1px solid #bbb; }

.searchbtn { position: absolute; left: 758px; top: 136px; width: 38px; height: 39px; background: #1b528f; border-radius: 3px; display: flex; align-items: center; justify-content: center; }
.mark { position: absolute; left: 0; top: 0; pointer-events: none; }
.note { position: absolute; left: 546px; top: 493px; font: 13px/14px "Liberation Mono", monospace; color: #111; }

.sogou { position: absolute; left: 783px; top: 411px; width: 167px; height: 20px; display: flex; align-items: center; gap: 5px; padding-left: 18px; background: #f4f9fe; border: 1px solid #cfe2f4; }
.slogo { position: absolute; left: -8px; top: -1px; width: 21px; height: 20px; border-radius: 3px; background: #f0571b; color: #fff; font: bold 19px/20px "Liberation Sans", sans-serif; text-align: center; transform: rotate(-12deg); }
.sg-en { color: #1e78c0; font-weight: 700; font-size: 12px; }
.sg { width: 14px; height: 14px; flex: none; }

.netwidget { position: absolute; left: 810px; top: 468px; width: 108px; height: 35px; border-radius: 18px; background: linear-gradient(#f6f6f6, #c4c4c4); box-shadow: 0 3px 6px rgba(0,0,0,.3); display: flex; align-items: center; }
.gauge { width: 40px; height: 40px; border-radius: 50%; flex: none; background: radial-gradient(circle at 50% 25%, #5fd07e, #2fb052 70%); border: 2px solid #e4e4e4; box-shadow: 0 0 0 1px #999; color: #e8ffe8; font: 13px/36px "Liberation Sans", sans-serif; text-align: center; }
.speeds { width: 42px; margin-left: 3px; display: flex; flex-direction: column; gap: 3px; flex: none; }
.sp { display: flex; justify-content: space-between; font: 8.500px/10px "Liberation Sans", sans-serif; color: #222; }
.up { color: #d04030; font-weight: 700; }
.down { color: #2a9a50; font-weight: 700; }
.plus { position: relative; width: 14px; height: 14px; border-radius: 50%; background: #3a80d8; margin-left: 3px; color: #fff; font: bold 12px/14px "Liberation Sans", sans-serif; text-align: center; flex: none; }
.dot { position: absolute; right: -2px; top: -1px; width: 6px; height: 6px; border-radius: 50%; background: #d83030; }
```
